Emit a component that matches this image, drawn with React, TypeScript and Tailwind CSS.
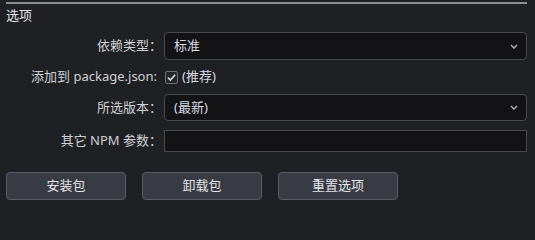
const labelCls = 'w-[156px] shrink-0 text-right text-[13px] text-[#cfd0d4]';

function Select({ value }: { value: string }) {
  return (
    <div className="flex items-center justify-between w-[363px] h-full bg-[#131316] border border-[#4a4b51] rounded-[4px] pl-[9px] pr-[8px]">
      <span className="text-[13px] text-[#d8dbe2]">{value}</span>
      <svg viewBox="0 0 8 5" className="w-[8px] h-[5px]">
        <path d="M1 1 L4 4 L7 1" fill="none" stroke="#a9aab0" strokeWidth="1.5" />
      </svg>
    </div>
  );
}

export default function App() {
  const buttons = ['安装包', '卸载包', '重置选项'];
  return (
    <div
      className="min-h-screen w-full bg-[#1f2024] px-[6px] pt-[2px] overflow-hidden"
      style={{ fontFamily: '"Noto Sans", "Noto Sans CJK SC", sans-serif' }}
    >
      <div className="h-[2px] w-[521px] bg-[#8d8e91]" />
      <div className="mt-[2px] leading-[18px] text-[13px] text-[#e4e6ea]">选项</div>

      {/* options */}
      <div className="flex items-center gap-[2px] h-[28px] mt-[8px]">
        <span className={labelCls}>依赖类型：</span>
        <Select value="标准" />
      </div>
      <div className="flex items-center gap-[2px] h-[34px]">
        <span className={`${labelCls} pr-[5px]`}>添加到 package.json:</span>
        <div className="flex items-center gap-[4px] pl-[1px]">
          <div className="w-[13px] h-[13px] bg-[#25262a] border border-[#707176] rounded-[2px] flex items-center justify-center">
            <svg viewBox="0 0 12 12" className="w-[11px] h-[11px]">
              <path d="M2 6 L4.8 8.8 L10 3" fill="none" stroke="#d9dadd" strokeWidth="1.8" />
            </svg>
          </div>
          <span className="text-[13px] text-[#d8dbe2]">(推荐)</span>
        </div>
      </div>
      <div className="flex items-center gap-[2px] h-[27px]">
        <span className={labelCls}>所选版本：</span>
        <Select value="(最新)" />
      </div>
      <div className="flex items-center gap-[2px] h-[22px] mt-[9px]">
        <span className={labelCls}>其它 NPM 参数：</span>
        <div className="w-[363px] h-full bg-[#131316] border border-[#4a4b51]" />
      </div>

      {/* actions */}
      <div className="flex gap-[16px] mt-[20px]">
        {buttons.map(b => (
          <button
            key={b}
            className="w-[120px] h-[28px] bg-[#393b44] border border-[#5c5d63] rounded-[4px] text-[13px] text-[#e2e4e8]"
          >
            {b}
          </button>
        ))}
      </div>
    </div>
  );
}
